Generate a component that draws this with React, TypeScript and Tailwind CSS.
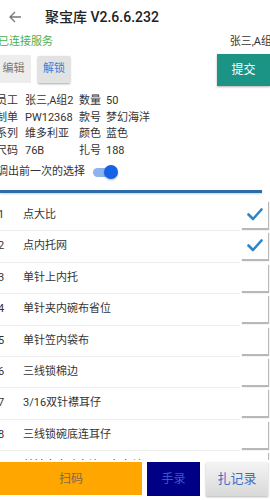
import React from "react";

const items = [
  "点大比",
  "点内托网",
  "单针上内托",
  "单针夹内碗布省位",
  "单针笠内袋布",
  "三线锁棉边",
  "3/16双针襟耳仔",
  "三线锁碗底连耳仔",
  "单针夹内碗布连耳仔包边",
];
const checked = [true, true, false, false, false, false, false, false, false];

function Check() {
  return (
    <svg width="16" height="13" viewBox="0 0 16 13">
      <path d="M1.5 6.5 L6 11 L14.5 1.5" fill="none" stroke="#2b86c9" strokeWidth="2.6" strokeLinecap="round" strokeLinejoin="round" />
    </svg>
  );
}

export default function App() {
  return (
    <div className="w-[270px] h-[500px] overflow-hidden bg-white flex flex-col font-['Roboto','Noto_Sans_CJK_SC',sans-serif] text-[11px] text-[#333]">
      {/* header */}
      <div className="h-[33px] shrink-0 flex items-center">
        <svg className="ml-[9px]" width="13" height="12" viewBox="0 0 13 12">
          <path d="M12 6 H1.5 M6 1 L1 6 L6 11" fill="none" stroke="#777" strokeWidth="1.3" />
        </svg>
        <div className="ml-[23px] text-[14px] font-medium text-[#222] leading-none">聚宝库 V2.6.6.232</div>
      </div>
      {/* status */}
      <div className="h-[19px] shrink-0 flex items-center justify-between ml-[-2px] mr-[-2px]">
        <span className="text-[#4caf50]">已连接服务</span>
        <span className="text-[#333]">张三,A组</span>
      </div>
      {/* buttons */}
      <div className="h-[35px] shrink-0 flex items-start">
        <div className="mt-[3px] w-[31px] h-[28px] bg-[#ededed] flex items-center justify-center text-[#777] text-[11px]">
          <span className="ml-[-4px]">编辑</span>
        </div>
        <div className="mt-[4px] ml-[7px] w-[32px] h-[27px] bg-[#e2e2e2] shadow-[0_1px_2px_rgba(0,0,0,0.35)] flex items-center justify-center text-[#3b7ad8] text-[11px]">
          解锁
        </div>
        <div className="flex-1" />
        <div className="mt-[2px] w-[53px] h-[32px] bg-[#1b9385] shadow-[0_1px_2px_rgba(0,0,0,0.3)] flex items-center justify-center text-white text-[12px]">
          提交
        </div>
      </div>
      {/* info */}
      <div className="pt-[6px] shrink-0">
        {[
          ["员工", "张三,A组2", "数量", "50"],
          ["制单", "PW12368", "款号", "梦幻海洋"],
          ["系列", "维多利亚", "颜色", "蓝色"],
          ["尺码", "76B", "扎号", "188"],
        ].map((r, i) => (
          <div key={i} className="h-[16.5px] flex items-center text-[11px] text-[#333] whitespace-nowrap">
            <span className="ml-[-4px] w-[29px]">{r[0]}</span>
            <span className="w-[54px]">{r[1]}</span>
            <span className="w-[27px]">{r[2]}</span>
            <span>{r[3]}</span>
          </div>
        ))}
      </div>
      {/* toggle */}
      <div className="mt-[1px] h-[24px] shrink-0 flex items-center">
        <span className="ml-[-3px] text-[11px] text-[#333]">调出前一次的选择</span>
        <div className="ml-[8px] relative w-[22px] h-[9px] rounded-full bg-[#8db3ef]">
          <div className="absolute right-[-3px] top-[-2.5px] w-[14px] h-[14px] rounded-full bg-[#1463e6] shadow-[0_1px_2px_rgba(0,0,0,0.3)]" />
        </div>
      </div>
      {/* blue line */}
      <div className="mt-[6px] h-[3px] w-[262px] shrink-0 bg-[#2d6ca8] shadow-[0_1px_2px_rgba(45,108,168,0.3)]" />
      {/* list */}
      <div className="pt-[7px] flex-1 overflow-hidden">
        {items.map((t, i) => (
          <div key={i} className="h-[31.4px] flex items-start">
            <div className="h-[31.4px] w-[240px] flex items-center border-b border-[#ececec]">
              <span className="ml-[-2px] w-[25px] text-[11px] text-[#333]">{i + 1}</span>
              <span className="text-[11px] text-[#333] whitespace-nowrap">{t}</span>
            </div>
            <div className="ml-[1px] w-[27px] h-[28px] bg-white shadow-[1px_2px_1px_rgba(0,0,0,0.28)] flex items-center justify-center">
              {checked[i] && <Check />}
            </div>
          </div>
        ))}
      </div>
      {/* bottom bar */}
      <div className="h-[40px] shrink-0 bg-white flex items-start pt-[2px]">
        <div className="w-[142px] h-[33px] bg-[#ffa600] flex items-center justify-center text-[#7e6a4c] text-[12px]">
          扫码
        </div>
        <div className="ml-[5px] w-[53px] h-[34px] bg-[#000086] flex items-center justify-center text-[#3b56c9] text-[12px]">
          手录
        </div>
        <div className="ml-[6px] w-[62px] h-[34px] bg-gradient-to-b from-[#f4f4f4] to-[#d9d9d9] shadow-[0_1px_2px_rgba(0,0,0,0.3)] flex items-center justify-center text-[#3b6fc4] text-[13px]">
          扎记录
        </div>
      </div>
    </div>
  );
}
